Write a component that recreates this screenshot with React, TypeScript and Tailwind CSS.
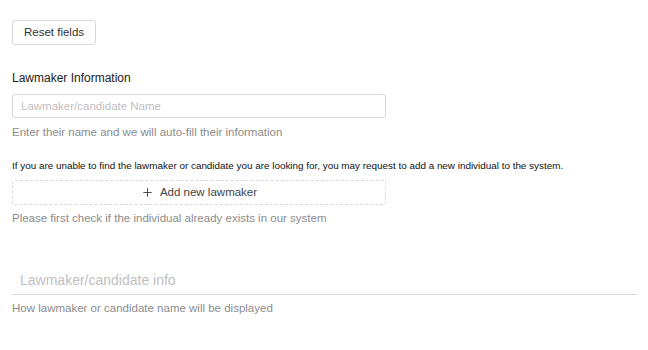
import { Plus } from 'lucide-react';

export default function App() {
  return (
    <div className="w-[648px] h-[350px] bg-white px-3 pt-[19px] text-[#333] font-['Liberation_Sans',Arial,sans-serif]">
      <button className="h-[25px] w-[84px] border border-[#d9d9d9] rounded-[3px] text-[11.5px] text-[#333] bg-white">
        Reset fields
      </button>

      {/* Lawmaker info */}
      <div className="mt-[24px] text-[12px] font-medium text-[#222]">Lawmaker Information</div>
      <input
        placeholder="Lawmaker/candidate Name"
        className="mt-[7px] block w-[374px] h-[24px] px-2 border border-[#d9d9d9] rounded-[3px] text-[11.5px] placeholder:text-[#bfbfbf] outline-none"
      />
      <p className="mt-[6px] text-[11.5px] text-[#8c8c8c]">Enter their name and we will auto-fill their information</p>

      <p className="mt-[18px] text-[9.9px] text-[#111]">
        If you are unable to find the lawmaker or candidate you are looking for, you may request to add a new individual to the system.
      </p>
      <button className="mt-[6px] flex items-center justify-center gap-[6px] w-[374px] h-[25px] border border-dashed border-[#d9d9d9] rounded-[3px] text-[11.5px] text-[#444]">
        <Plus size={13} strokeWidth={1.6} className="text-[#333]" />
        Add new lawmaker
      </button>
      <p className="mt-[5px] text-[11.5px] text-[#8c8c8c]">Please first check if the individual already exists in our system</p>

      {/* Display name */}
      <div className="mt-[43px] w-[625px] border-b border-[#d5dbe0] pb-[3px] pl-2 text-[14px] text-[#bfbfbf]">
        Lawmaker/candidate info
      </div>
      <p className="mt-[5px] text-[11.5px] text-[#8c8c8c]">How lawmaker or candidate name will be displayed</p>
    </div>
  );
}
